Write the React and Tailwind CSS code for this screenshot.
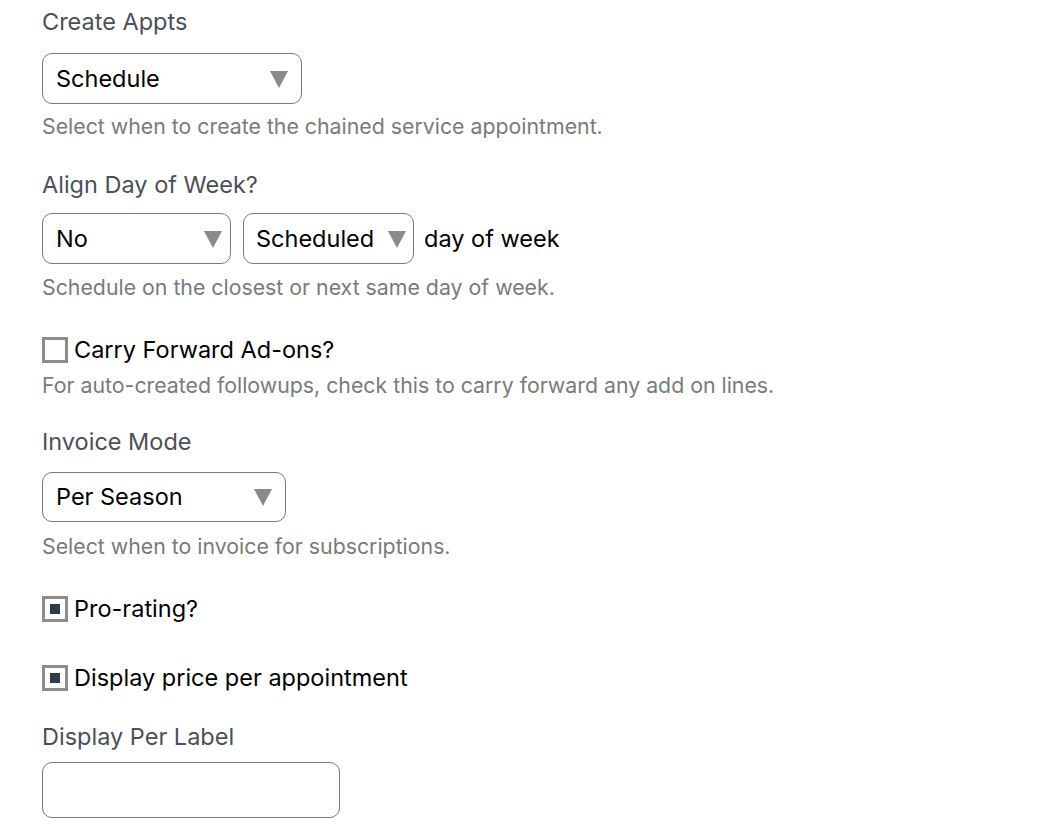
import React from "react";

const Arrow = () => (
    <svg width="18" height="18" viewBox="0 0 18 18" className="shrink-0">
        <polygon points="0,1 18,1 9,18" fill="#8a8a8a" />
    </svg>
);

const Select = ({ value, className }) => (
    <div className={`flex items-center justify-between rounded-[10px] border border-[#7a7a7a] bg-white text-[23.5px] text-black ${className}`}>
        <span>{value}</span>
        <Arrow />
    </div>
);

const Checkbox = ({ checked }) => (
    <div className="flex h-[26px] w-[26px] shrink-0 items-center justify-center border-[3px] border-[#8c8c8c] bg-white">
        {checked && <div className="h-[10px] w-[10px] bg-[#2e3a4e]" />}
    </div>
);

const Label = ({ children, className = "" }) => (
    <div className={`text-[23.5px] leading-[28px] text-[#4b4f58] ${className}`}>{children}</div>
);

const Help = ({ children, className = "" }) => (
    <div className={`text-[21.3px] leading-[24px] text-[#7a7a7a] ${className}`}>{children}</div>
);

export default function App() {
    return (
        <div className="min-h-screen bg-white px-[42px] pt-[8px]" style={{ fontFamily: "Inter, 'Noto Sans', sans-serif" }}>
            <Label>Create Appts</Label>
            <Select value="Schedule" className="mt-[17px] h-[51px] w-[260px] pl-[13px] pr-[13px]" />
            <Help className="mt-[10px]">Select when to create the chained service appointment.</Help>

            <Label className="mt-[33px]">Align Day of Week?</Label>
            <div className="mt-[14px] flex items-center">
                <Select value="No" className="h-[51px] w-[189px] pl-[13px] pr-[8px]" />
                <Select value="Scheduled" className="ml-[12px] h-[51px] w-[171px] pl-[12px] pr-[7px]" />
                <span className="ml-[10px] text-[23.5px] text-black">day of week</span>
            </div>
            <Help className="mt-[11px]">Schedule on the closest or next same day of week.</Help>

            <div className="mt-[37px] flex h-[28px] items-center gap-[6px]">
                <Checkbox />
                <span className="text-[23.5px] text-black">Carry Forward Ad-ons?</span>
            </div>
            <Help className="mt-[9px]">For auto-created followups, check this to carry forward any add on lines.</Help>

            <Label className="mt-[31px]">Invoice Mode</Label>
            <Select value="Per Season" className="mt-[16px] h-[50px] w-[244px] pl-[13px] pr-[13px]" />
            <Help className="mt-[12px]">Select when to invoice for subscriptions.</Help>

            <div className="mt-[37px] flex h-[28px] items-center gap-[6px]">
                <Checkbox checked />
                <span className="text-[23.5px] text-black">Pro-rating?</span>
            </div>

            <div className="mt-[41px] flex h-[28px] items-center gap-[6px]">
                <Checkbox checked />
                <span className="text-[23.5px] text-black">Display price per appointment</span>
            </div>

            <Label className="mt-[31px]">Display Per Label</Label>
            <div className="mt-[11px] h-[56px] w-[298px] rounded-[10px] border border-[#7a7a7a] bg-white" />
        </div>
    );
}
